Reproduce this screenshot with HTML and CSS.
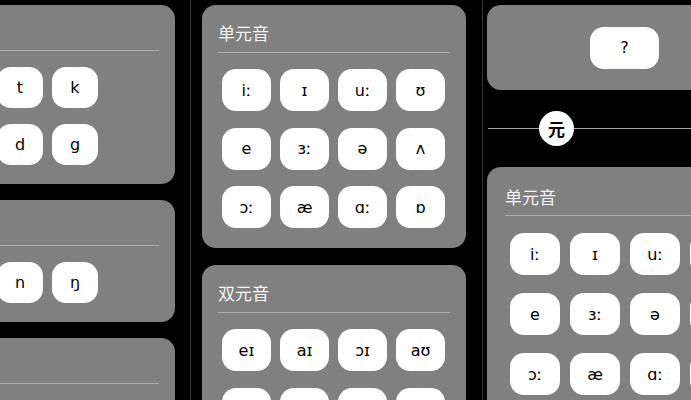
FILE: index.html
```html
<!DOCTYPE html>
<html lang="zh-CN">
<head>
<meta charset="utf-8">
<title>音标</title>
<link rel="stylesheet" href="styles.css">
</head>
<body>
<div class="stage">
  <section class="pane pane-a">
    <div class="card">
      <h2 class="card-head">爆破音</h2>
      <div class="keys keys-3">
        <div class="key">p</div><div class="key">t</div><div class="key">k</div>
        <div class="key">b</div><div class="key">d</div><div class="key">g</div>
      </div>
    </div>
    <div class="card">
      <h2 class="card-head">鼻音</h2>
      <div class="keys keys-3">
        <div class="key">m</div><div class="key">n</div><div class="key">ŋ</div>
      </div>
    </div>
    <div class="card">
      <h2 class="card-head">摩擦音</h2>
      <div class="keys">
        <div class="key">f</div><div class="key">v</div><div class="key">θ</div><div class="key">ð</div>
      </div>
    </div>
  </section>
  <div class="vdiv"></div>
  <section class="pane pane-b">
    <div class="card">
      <h2 class="card-head">单元音</h2>
      <div class="keys">
        <div class="key">iː</div><div class="key">ɪ</div><div class="key">uː</div><div class="key">ʊ</div>
        <div class="key">e</div><div class="key">ɜː</div><div class="key">ə</div><div class="key">ʌ</div>
        <div class="key">ɔː</div><div class="key">æ</div><div class="key">ɑː</div><div class="key">ɒ</div>
      </div>
    </div>
    <div class="card">
      <h2 class="card-head">双元音</h2>
      <div class="keys">
        <div class="key">eɪ</div><div class="key">aɪ</div><div class="key">ɔɪ</div><div class="key">aʊ</div>
        <div class="key">ɪə</div><div class="key">eə</div><div class="key">ʊə</div><div class="key">əʊ</div>
      </div>
    </div>
  </section>
  <div class="vdiv"></div>
  <section class="pane pane-c">
    <div class="ask-card">
      <div class="key key-wide">?</div>
    </div>
    <div class="sep">
      <span class="sep-line sep-left"></span>
      <span class="sep-badge">元</span>
      <span class="sep-line sep-right"></span>
    </div>
    <div class="card">
      <h2 class="card-head">单元音</h2>
      <div class="keys">
        <div class="key">iː</div><div class="key">ɪ</div><div class="key">uː</div><div class="key">ʊ</div>
        <div class="key">e</div><div class="key">ɜː</div><div class="key">ə</div><div class="key">ʌ</div>
        <div class="key">ɔː</div><div class="key">æ</div><div class="key">ɑː</div><div class="key">ɒ</div>
      </div>
    </div>
  </section>
</div>
</body>
</html>
```

FILE: styles.css
```css
* { box-sizing: border-box; }

html, body {
  margin: 0;
  background: #000;
}

body {
  width: 691px;
  height: 400px;
  overflow: hidden;
  font-family: "DejaVu Sans", "Noto Sans CJK SC", sans-serif;
}

.stage {
  display: flex;
  height: 400px;
  overflow: hidden;
}

.pane {
  flex: none;
  overflow: hidden;
  display: flex;
  flex-direction: column;
  padding-top: 5px;
  height: 400px;
}

.vdiv {
  flex: none;
  width: 1px;
  height: 400px;
  background: #383838;
}

/* left phone: slightly smaller scale, scrolled to the left */
.pane-a {
  width: 190px;
  gap: 16px;
  --cw: 253px; --ml: -78px; --px: 16px; --pb: 19px;
  --pt: 15px; --lh: 23px; --hb: 7px; --mt: 16px;
  --bw: 46px; --bh: 41px; --gx: 9px; --gy: 16px; --inset: 4px;
}

/* middle phone */
.pane-b {
  width: 291px;
  gap: 17px;
  --cw: 264px; --ml: 11px; --px: 16px; --pb: 20px;
  --pt: 16px; --lh: 24px; --hb: 7px; --mt: 16px;
  --bw: 49px; --bh: 42px; --gx: 9px; --gy: 16.5px; --inset: 4px;
}

/* right phone: slightly larger scale */
.pane-c {
  flex: 1;
  min-width: 0;
  --cw: 275px; --ml: 4px; --px: 18px; --pb: 20px;
  --pt: 17px; --lh: 25px; --hb: 6px; --mt: 17px;
  --bw: 50px; --bh: 42px; --gx: 10px; --gy: 18px; --inset: 5px;
}

.card {
  flex: none;
  width: var(--cw);
  margin-left: var(--ml);
  padding: 0 var(--px) var(--pb);
  background: #808080;
  border-radius: 14px;
}

.card-head {
  margin: 0;
  padding-top: var(--pt);
  padding-bottom: var(--hb);
  border-bottom: 1px solid #acacac;
  font-family: "Noto Sans CJK SC", sans-serif;
  font-size: 17px;
  line-height: var(--lh);
  font-weight: 400;
  color: #f4f4f4;
}

.keys {
  display: grid;
  grid-template-columns: repeat(4, var(--bw));
  column-gap: var(--gx);
  row-gap: var(--gy);
  padding: 0 var(--inset);
  margin-top: var(--mt);
}

.keys-3 {
  grid-template-columns: repeat(3, var(--bw));
}

.key {
  height: var(--bh);
  background: #fff;
  border-radius: 14px;
  display: flex;
  align-items: center;
  justify-content: center;
  font-family: "DejaVu Sans", sans-serif;
  font-size: 16px;
  color: #000;
}

.ask-card {
  flex: none;
  width: var(--cw);
  margin-left: var(--ml);
  height: 85px;
  background: #808080;
  border-radius: 14px;
  display: flex;
  align-items: center;
  justify-content: center;
}

.key-wide {
  width: 69px;
}

.sep {
  flex: none;
  display: flex;
  align-items: center;
  height: 36px;
  margin: 20px 0 21px 5px;
}

.sep-line {
  height: 1px;
  background: #a8a8a8;
}

.sep-left { width: 51px; flex: none; }
.sep-right { flex: 1; }

.sep-badge {
  flex: none;
  width: 35px;
  height: 35px;
  border-radius: 50%;
  background: #fff;
  color: #000;
  display: flex;
  align-items: center;
  justify-content: center;
  font-family: "Noto Sans CJK SC", sans-serif;
  font-size: 17px;
  font-weight: 700;
}
```
